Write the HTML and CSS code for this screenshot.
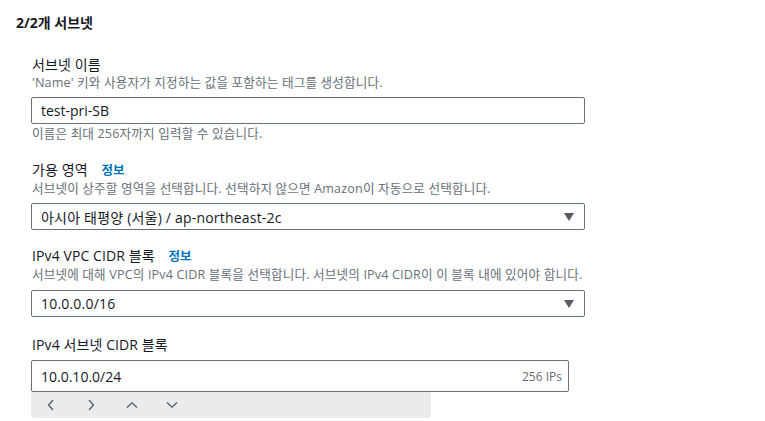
FILE: index.html
```html
<!DOCTYPE html>
<html lang="ko">
<head>
<meta charset="utf-8">
<link rel="stylesheet" href="styles.css">
</head>
<body>
<div class="page">
  <h2 class="title">2/2개 서브넷</h2>
  <div class="fields">
    <div class="field f1">
      <div class="label">서브넷 이름</div>
      <div class="desc">'Name' 키와 사용자가 지정하는 값을 포함하는 태그를 생성합니다.</div>
      <div class="input"><span class="value">test-pri-SB</span></div>
      <div class="desc hint">이름은 최대 256자까지 입력할 수 있습니다.</div>
    </div>
    <div class="field f2">
      <div class="label">가용 영역 <a class="info">정보</a></div>
      <div class="desc">서브넷이 상주할 영역을 선택합니다. 선택하지 않으면 Amazon이 자동으로 선택합니다.</div>
      <div class="input select"><span class="value">아시아 태평양 (서울) / ap-northeast-2c</span><span class="caret"></span></div>
    </div>
    <div class="field f3">
      <div class="label">IPv4 VPC CIDR 블록 <a class="info">정보</a></div>
      <div class="desc">서브넷에 대해 VPC의 IPv4 CIDR 블록을 선택합니다. 서브넷의 IPv4 CIDR이 이 블록 내에 있어야 합니다.</div>
      <div class="input select"><span class="value">10.0.0.0/16</span><span class="caret"></span></div>
    </div>
    <div class="field f4">
      <div class="label">IPv4 서브넷 CIDR 블록</div>
      <div class="input cidr"><span class="value">10.0.10.0/24</span><span class="count">256 IPs</span></div>
      <div class="toolbar">
        <span class="tool"><svg width="10" height="12" viewBox="0 0 10 12"><path d="M7 1 L2.5 6 L7 11" fill="none" stroke="#545b64" stroke-width="1.3"/></svg></span>
        <span class="tool"><svg width="10" height="12" viewBox="0 0 10 12"><path d="M3 1 L7.5 6 L3 11" fill="none" stroke="#545b64" stroke-width="1.3"/></svg></span>
        <span class="tool"><svg width="12" height="8" viewBox="0 0 12 8"><path d="M1 6.5 L6 1.8 L11 6.5" fill="none" stroke="#545b64" stroke-width="1.3"/></svg></span>
        <span class="tool"><svg width="12" height="8" viewBox="0 0 12 8"><path d="M1 1.5 L6 6.2 L11 1.5" fill="none" stroke="#545b64" stroke-width="1.3"/></svg></span>
      </div>
    </div>
  </div>
</div>
</body>
</html>
```
FILE: styles.css
```css
html, body {
  margin: 0;
  padding: 0;
  background: #ffffff;
}
body {
  font-family: "Open Sans", "Noto Sans CJK KR", sans-serif;
  color: #16191f;
}
.page {
  padding: 13px 0 0 16px;
}
.title {
  margin: 0;
  font-size: 14px;
  line-height: 20px;
  font-weight: 700;
}
.fields {
  padding-left: 15px;
  padding-top: 22px;
  display: flex;
  flex-direction: column;
}
.field {
  display: flex;
  flex-direction: column;
}
.f2 { margin-top: 18px; }
.f3 { margin-top: 16px; }
.f4 { margin-top: 18px; }
.label {
  font-size: 14px;
  line-height: 20px;
  padding-left: 1px;
  color: #16191f;
  letter-spacing: 0.1px;
}
.info {
  color: #0073bb;
  font-weight: 700;
  font-size: 12.5px;
  margin-left: 10px;
}
.desc {
  font-size: 12.6px;
  line-height: 16px;
  letter-spacing: 0.15px;
  color: #687078;
  padding-left: 1px;
  white-space: nowrap;
}
.hint {
  margin-top: 2px;
}
.input {
  margin-top: 6px;
  width: 554px;
  height: 27px;
  box-sizing: border-box;
  border: 1px solid #687078;
  border-radius: 2px;
  display: flex;
  align-items: center;
  justify-content: space-between;
  padding: 0 10px 0 9px;
  font-size: 14px;
  color: #16191f;
}
.select .value {
  letter-spacing: 0.2px;
}
.f3 .input { margin-top: 7px; }
.caret {
  width: 0;
  height: 0;
  border-left: 5px solid transparent;
  border-right: 5px solid transparent;
  border-top: 8px solid #545b64;
}
.cidr {
  width: 538px;
  height: 32px;
  margin-top: 5px;
  padding-right: 6px;
}
.count {
  font-size: 12px;
  color: #687078;
}
.toolbar {
  width: 400px;
  height: 26px;
  background: #e9ebed;
  border-radius: 0 0 4px 4px;
  display: flex;
  align-items: center;
  padding-left: 15px;
  box-sizing: border-box;
}
.tool {
  width: 40px;
  display: flex;
  justify-content: flex-start;
  align-items: center;
}
```
